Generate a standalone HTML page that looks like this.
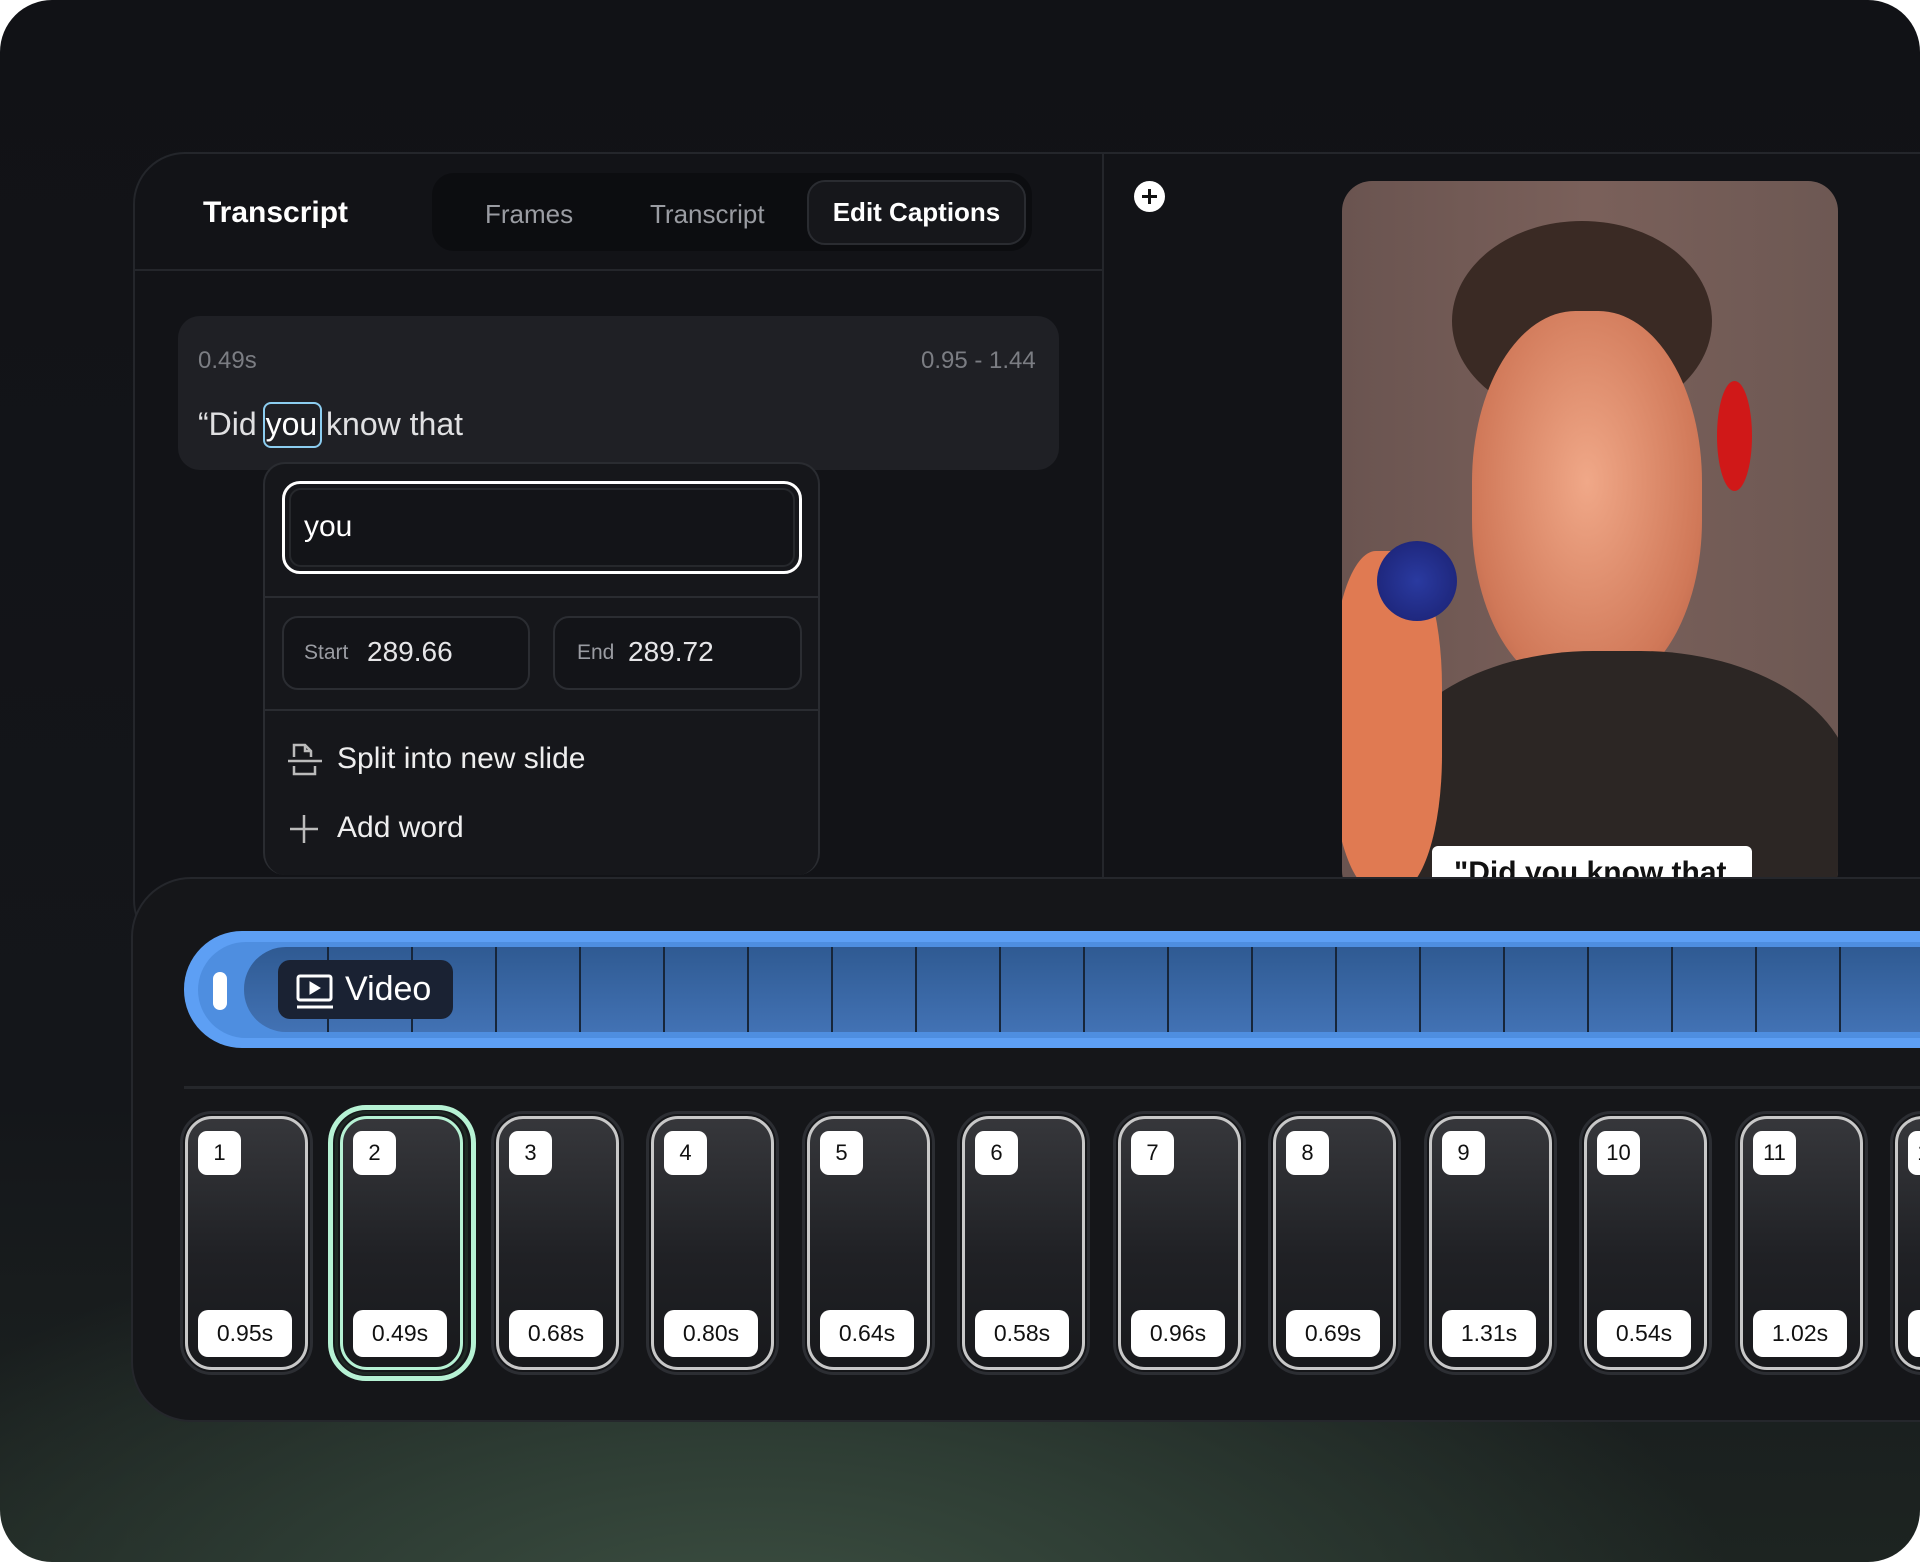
<!DOCTYPE html>
<html><head><meta charset="utf-8"><style>
*{box-sizing:border-box;margin:0;padding:0}
body{width:1920px;height:1562px;background:#fff;font-family:"Liberation Sans",sans-serif;overflow:hidden;position:relative}
.frame{position:absolute;left:0;top:0;width:1920px;height:1562px;border-radius:52px;overflow:hidden;
background:radial-gradient(ellipse 1000px 440px at 750px 1640px,#3d5042 0%,#2e3d34 45%,rgba(20,22,24,0) 100%),linear-gradient(#111216 0%,#14161a 70%,#1d2421 100%)}
.abs{position:absolute}
.top{left:133px;top:152px;width:1900px;height:800px;border:2px solid #24262b;border-radius:52px;background:#121317}
.t{color:#fff}
.tabs{left:432px;top:173px;width:600px;height:78px;background:#0c0d10;border-radius:22px}
.cap{left:807px;top:180px;width:219px;height:65px;border:2px solid #2a2c31;background:#16171b;border-radius:18px;color:#fff;font-size:26px;line-height:61px;text-align:center;font-weight:bold}
.card{left:178px;top:316px;width:881px;height:154px;background:#1f2025;border-radius:22px}
.pop{left:263px;top:462px;width:557px;height:413px;background:#16171b;border:2px solid #2a2c31;border-radius:22px;border-bottom:none}
.box{border:2px solid #2b2d32;border-radius:16px;background:#131418}
.bot{left:131px;top:877px;width:1900px;height:545px;background:#151619;border:2px solid #25272c;border-radius:60px}
.thumb{position:absolute;top:1111px;width:133px;height:264px;border-radius:32px;border:3px solid #2c2e33;padding:2px}
.thumb .in{width:100%;height:100%;border:3px solid #c8c8c8;border-radius:27px;background:linear-gradient(#36373b,#202125 55%,#18191c);position:relative}
.num{position:absolute;left:10px;top:12px;height:44px;min-width:43px;padding:0 9px;background:#fff;border-radius:9px;font-size:22px;line-height:44px;text-align:center;color:#111}
.dur{position:absolute;left:10px;bottom:10px;height:47px;width:94px;background:#fff;border-radius:10px;font-size:23px;line-height:47px;text-align:center;color:#111}
</style></head><body><div class="frame">
<div class="abs top"></div>
<div class="abs" style="left:1102px;top:153px;width:2px;height:724px;background:#24262b"></div>
<div class="abs" style="left:135px;top:269px;width:967px;height:2px;background:#24262b"></div>
<div class="abs t" style="left:203px;top:196px;font-size:30px;font-weight:bold">Transcript</div>
<div class="abs tabs"></div>
<div class="abs" style="left:485px;top:199px;font-size:26px;color:#9a9ca2">Frames</div>
<div class="abs" style="left:650px;top:199px;font-size:26px;color:#9a9ca2">Transcript</div>
<div class="abs cap">Edit Captions</div>
<div class="abs card"></div>
<div class="abs" style="left:198px;top:347px;font-size:24px;color:#7b7d83">0.49s</div>
<div class="abs" style="left:921px;top:347px;font-size:24px;color:#7b7d83">0.95 - 1.44</div>
<div class="abs" style="left:198px;top:406px;font-size:32px;color:#e0e0e2;white-space:pre">“Did <span style="color:#fff">you</span> know that</div>
<div class="abs" style="left:263px;top:402px;width:59px;height:46px;border:2px solid #8ccdf0;border-radius:8px"></div>
<div class="abs pop"></div>
<div class="abs" style="left:282px;top:481px;width:520px;height:93px;border:3px solid #fff;border-radius:18px;padding:4px"><div style="width:100%;height:100%;border:2px solid #26282c;border-radius:12px;background:#131418"></div></div>
<div class="abs t" style="left:304px;top:510px;font-size:30px">you</div>
<div class="abs" style="left:265px;top:596px;width:553px;height:2px;background:#2a2c31"></div>
<div class="abs box" style="left:282px;top:616px;width:248px;height:74px"></div>
<div class="abs box" style="left:553px;top:616px;width:249px;height:74px"></div>
<div class="abs" style="left:304px;top:641px;font-size:21px;color:#9a9ca2">Start</div>
<div class="abs t" style="left:367px;top:636px;font-size:28px;color:#e6e6e8">289.66</div>
<div class="abs" style="left:577px;top:641px;font-size:21px;color:#9a9ca2">End</div>
<div class="abs t" style="left:628px;top:636px;font-size:28px;color:#e6e6e8">289.72</div>
<div class="abs" style="left:265px;top:709px;width:553px;height:2px;background:#2a2c31"></div>
<svg class="abs" style="left:286px;top:742px" width="38" height="36" viewBox="0 0 38 36" fill="none" stroke="#bbb" stroke-width="2.5"><path d="M8 15V3h11l6 6v6M19 3v6h6M2 19h34M8 24v8h21v-8"/></svg>
<div class="abs t" style="left:337px;top:742px;font-size:30px;color:#eee">Split into new slide</div>
<svg class="abs" style="left:288px;top:813px" width="32" height="32" stroke="#bbb" stroke-width="2.5"><path d="M16 2v28M2 16h28"/></svg>
<div class="abs t" style="left:337px;top:811px;font-size:30px;color:#eee">Add word</div>
<div class="abs" style="left:1134px;top:181px;width:31px;height:31px;border-radius:50%;background:#fff"><svg width="31" height="31" stroke="#111" stroke-width="3"><path d="M15.5 8v15M8 15.5h15"/></svg></div>
<div class="abs" style="left:1342px;top:181px;width:496px;height:720px;border-radius:30px;overflow:hidden;background:linear-gradient(90deg,#6a5450,#7a605a 50%,#6d5853)">
 <div class="abs" style="left:110px;top:40px;width:260px;height:200px;border-radius:50%;background:#3a2a24"></div>
 <div class="abs" style="left:130px;top:130px;width:230px;height:380px;border-radius:45%;background:radial-gradient(ellipse at 50% 45%,#f0a888,#d07858 70%,#a85a44)"></div>
 <div class="abs" style="left:375px;top:200px;width:35px;height:110px;border-radius:50%;background:#d01818"></div>
 <div class="abs" style="left:40px;top:470px;width:470px;height:300px;border-radius:45% 45% 0 0;background:#2c2624"></div>
 <div class="abs" style="left:-10px;top:370px;width:110px;height:340px;border-radius:40%;background:#e07a52"></div>
 <div class="abs" style="left:35px;top:360px;width:80px;height:80px;border-radius:50%;background:radial-gradient(#2a3aa0,#1a2070)"></div>
 <div class="abs" style="left:90px;top:665px;width:320px;height:60px;background:#fff;border-radius:6px;font-size:30px;font-weight:bold;color:#111;padding:10px 22px">"Did you know that</div>
</div>
<div class="abs bot"></div>
<div class="abs" style="left:184px;top:931px;width:1800px;height:117px;background:#5d9ff4;border-radius:58px 0 0 58px"></div>
<div class="abs" style="left:198px;top:942px;width:1800px;height:96px;background:#4e8ee0;border-radius:48px 0 0 48px"></div>
<div class="abs" style="left:244px;top:947px;width:1700px;height:85px;border-radius:42px 0 0 42px;background:linear-gradient(#2f5a92,#4272b4);overflow:hidden">
<svg width="1700" height="85" style="position:absolute;left:0;top:0"><g stroke="#17263a" stroke-width="2">
<path d="M84 0v85M168 0v85M252 0v85M336 0v85M420 0v85M504 0v85M588 0v85M672 0v85M756 0v85M840 0v85M924 0v85M1008 0v85M1092 0v85M1176 0v85M1260 0v85M1344 0v85M1428 0v85M1512 0v85M1596 0v85"/></g></svg></div>
<div class="abs" style="left:213px;top:972px;width:14px;height:38px;border-radius:7px;background:#fff"></div>
<div class="abs" style="left:278px;top:960px;width:175px;height:59px;background:#1a2233;border-radius:12px"></div>
<svg class="abs" style="left:295px;top:974px" width="40" height="36" fill="none" stroke="#fff" stroke-width="3"><rect x="3" y="2" width="33" height="24" rx="2"/><path d="M2 33h36"/><path d="M15 8v12l10-6z" fill="#fff" stroke-width="1"/></svg>
<div class="abs t" style="left:345px;top:970px;font-size:34px">Video</div>
<div class="abs" style="left:184px;top:1086px;width:1800px;height:3px;background:#25272b"></div>
<div class="abs" style="left:328px;top:1105px;width:148px;height:276px;border:5px solid #b6f2d4;border-radius:38px"></div>
<div class="thumb" style="left:180px"><div class="in"><div class="num">1</div><div class="dur">0.95s</div></div></div>
<div class="thumb" style="left:335px;border-color:#1f2a25"><div class="in" style="border-color:#b6f2d4"><div class="num">2</div><div class="dur">0.49s</div></div></div>
<div class="thumb" style="left:491px"><div class="in"><div class="num">3</div><div class="dur">0.68s</div></div></div>
<div class="thumb" style="left:646px"><div class="in"><div class="num">4</div><div class="dur">0.80s</div></div></div>
<div class="thumb" style="left:802px"><div class="in"><div class="num">5</div><div class="dur">0.64s</div></div></div>
<div class="thumb" style="left:957px"><div class="in"><div class="num">6</div><div class="dur">0.58s</div></div></div>
<div class="thumb" style="left:1113px"><div class="in"><div class="num">7</div><div class="dur">0.96s</div></div></div>
<div class="thumb" style="left:1268px"><div class="in"><div class="num">8</div><div class="dur">0.69s</div></div></div>
<div class="thumb" style="left:1424px"><div class="in"><div class="num">9</div><div class="dur">1.31s</div></div></div>
<div class="thumb" style="left:1579px"><div class="in"><div class="num">10</div><div class="dur">0.54s</div></div></div>
<div class="thumb" style="left:1735px"><div class="in"><div class="num">11</div><div class="dur">1.02s</div></div></div>
<div class="thumb" style="left:1890px"><div class="in"><div class="num">12</div><div class="dur">0.70s</div></div></div>
</div></body></html>
